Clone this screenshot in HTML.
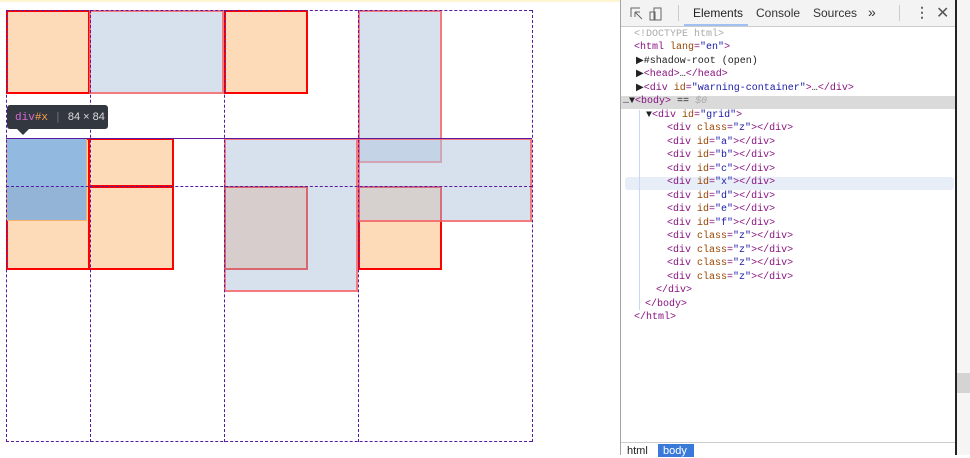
<!DOCTYPE html>
<html><head><style>
body{margin:0;width:970px;height:455px;overflow:hidden;background:#fff;position:relative;font-family:"Liberation Sans",sans-serif}
.a{position:absolute;box-sizing:border-box}
.o{background:#fddbb9;border:2px solid #f00}
.b{background:rgba(183,201,224,.55);border:2px solid rgba(255,80,80,.7)}
.h{border-left:1px dashed #5a1aa0}
.v{border-top:1px dashed #5a1aa0}
#dt{position:absolute;left:620px;top:0;width:337px;height:455px;border-left:1px solid #a3a3a3;background:#fff}
.tb{height:26px;border-bottom:1px solid #ccc;background:#f3f3f3;font-size:12px;color:#333}
.ln{position:absolute;left:0;font:10px/13.5px "Liberation Mono",monospace;white-space:pre;color:#881280}
.at{color:#994500}.av{color:#1a1aa6}.g{color:#aaa}.k{color:#222}
</style></head><body>
<div class="a" style="left:0;top:0;width:620px;height:2px;background:#fdf5d4"></div>
<div class="a o" style="left:6px;top:10px;width:84px;height:84px"></div>
<div class="a b" style="left:89px;top:10px;width:135px;height:84px"></div>
<div class="a o" style="left:224px;top:10px;width:84px;height:84px"></div>
<div class="a b" style="left:358px;top:10px;width:84px;height:153px"></div>
<div class="a o" style="left:6px;top:138px;width:84px;height:132px"></div>
<div class="a o" style="left:88px;top:138px;width:86px;height:49px"></div>
<div class="a o" style="left:88px;top:186px;width:86px;height:84px"></div>
<div class="a b" style="left:224px;top:138px;width:134px;height:154px"></div>
<div class="a" style="left:224px;top:186px;width:84px;height:84px;background:rgba(215,200,195,.8);border:2px solid rgba(220,60,70,.7)"></div>
<div class="a o" style="left:358px;top:186px;width:84px;height:84px"></div>
<div class="a b" style="left:358px;top:138px;width:174px;height:84px"></div>
<div class="a" style="left:6px;top:138px;width:81px;height:83px;background:#92b9e0;border:1px solid #f6b26b"></div>
<div class="a" style="left:7px;top:187px;width:79px;height:33px;background:#93b4d6"></div>
<div class="a h" style="left:6px;top:10px;height:432px"></div>
<div class="a h" style="left:90px;top:10px;height:432px"></div>
<div class="a h" style="left:224px;top:10px;height:432px"></div>
<div class="a h" style="left:358px;top:10px;height:432px"></div>
<div class="a h" style="left:532px;top:10px;height:432px"></div>
<div class="a v" style="left:6px;top:10px;width:526px"></div>
<div class="a v" style="left:6px;top:138px;width:526px;border-top-style:solid"></div>
<div class="a v" style="left:6px;top:186px;width:526px"></div>
<div class="a v" style="left:6px;top:441px;width:526px"></div>
<div class="a" style="left:7px;top:105px;width:101px;height:24px;background:#333740;border-radius:3px;font:11px/24px 'Liberation Mono',monospace;color:#ddd;padding-left:8px;white-space:nowrap"><span style="color:#d56ad6">div</span><span style="color:#f7a04b">#x</span> <span style="color:#777">|</span> <span style="font-family:'Liberation Sans'">84 × 84</span></div>
<div class="a" style="left:17px;top:129px;border:6px solid transparent;border-top:6px solid #333740;border-bottom:0"></div>
<div id="dt">
<div class="tb">
<svg style="position:absolute;left:8px;top:6px" width="34" height="16" fill="none" stroke="#666"><path d="M2 11V2h9M6 6l7 7M6 6h5M6 6v5" /><rect x="25" y="2" width="7" height="12"/><rect x="21" y="6" width="5" height="8"/></svg>
<div style="position:absolute;left:57px;top:5px;width:1px;height:16px;background:#ccc"></div>
<span style="position:absolute;left:72px;top:6px;color:#222">Elements</span>
<div style="position:absolute;left:63px;top:24px;width:64px;height:2px;background:#9fc0f0"></div>
<span style="position:absolute;left:135px;top:6px">Console</span>
<span style="position:absolute;left:192px;top:6px">Sources</span>
<span style="position:absolute;left:247px;top:4px;font-size:14px">»</span>
<div style="position:absolute;left:278px;top:5px;width:1px;height:16px;background:#ccc"></div>
<span style="position:absolute;left:294px;top:4px;font-size:14px;font-weight:bold;color:#666">⋮</span>
<span style="position:absolute;left:315px;top:3px;font-size:16px;color:#555">✕</span>
</div>
<div style="position:absolute;left:0;top:96px;width:337px;height:13px;background:#dadada"></div>
<div style="position:absolute;left:4px;top:177px;width:329px;height:13px;background:#e8eef8;border-radius:3px"></div>
<div style="position:absolute;left:18px;top:110px;width:1px;height:200px;background:#c8d8f4"></div>
<div class="ln g" style="top:28px;left:13px">&lt;!DOCTYPE html&gt;</div>
<div class="ln" style="top:41px;left:13px">&lt;html <span class="at">lang</span>=<span class="av">"en"</span>&gt;</div>
<div class="ln k" style="top:55px;left:15px">▶#shadow-root (open)</div>
<div class="ln" style="top:68px;left:15px"><span class="k">▶</span>&lt;head&gt;<span class="k">…</span>&lt;/head&gt;</div>
<div class="ln" style="top:82px;left:15px"><span class="k">▶</span>&lt;div <span class="at">id</span>=<span class="av">"warning-container"</span>&gt;<span class="k">…</span>&lt;/div&gt;</div>
<div class="ln" style="top:95px;left:2px"><span class="k">…▼</span>&lt;body&gt; <span class="k">==</span> <span class="g" style="font-style:italic">$0</span></div>
<div class="ln" style="top:109px;left:25px"><span class="k">▼</span>&lt;div <span class="at">id</span>=<span class="av">"grid"</span>&gt;</div>
<div class="ln" style="top:122px;left:46px">&lt;div <span class="at">class</span>=<span class="av">"z"</span>&gt;&lt;/div&gt;</div>
<div class="ln" style="top:136px;left:46px">&lt;div <span class="at">id</span>=<span class="av">"a"</span>&gt;&lt;/div&gt;</div>
<div class="ln" style="top:149px;left:46px">&lt;div <span class="at">id</span>=<span class="av">"b"</span>&gt;&lt;/div&gt;</div>
<div class="ln" style="top:163px;left:46px">&lt;div <span class="at">id</span>=<span class="av">"c"</span>&gt;&lt;/div&gt;</div>
<div class="ln" style="top:176px;left:46px">&lt;div <span class="at">id</span>=<span class="av">"x"</span>&gt;&lt;/div&gt;</div>
<div class="ln" style="top:190px;left:46px">&lt;div <span class="at">id</span>=<span class="av">"d"</span>&gt;&lt;/div&gt;</div>
<div class="ln" style="top:203px;left:46px">&lt;div <span class="at">id</span>=<span class="av">"e"</span>&gt;&lt;/div&gt;</div>
<div class="ln" style="top:217px;left:46px">&lt;div <span class="at">id</span>=<span class="av">"f"</span>&gt;&lt;/div&gt;</div>
<div class="ln" style="top:230px;left:46px">&lt;div <span class="at">class</span>=<span class="av">"z"</span>&gt;&lt;/div&gt;</div>
<div class="ln" style="top:244px;left:46px">&lt;div <span class="at">class</span>=<span class="av">"z"</span>&gt;&lt;/div&gt;</div>
<div class="ln" style="top:257px;left:46px">&lt;div <span class="at">class</span>=<span class="av">"z"</span>&gt;&lt;/div&gt;</div>
<div class="ln" style="top:271px;left:46px">&lt;div <span class="at">class</span>=<span class="av">"z"</span>&gt;&lt;/div&gt;</div>
<div class="ln" style="top:284px;left:35px">&lt;/div&gt;</div>
<div class="ln" style="top:298px;left:24px">&lt;/body&gt;</div>
<div class="ln" style="top:311px;left:13px">&lt;/html&gt;</div>
<div style="position:absolute;left:0;top:442px;width:337px;height:13px;border-top:1px solid #ccc;font-size:11px">
<span style="position:absolute;left:6px;top:2px;color:#222">html</span>
<span style="position:absolute;left:37px;top:1px;width:36px;height:13px;background:#3879d9;color:#fff;padding-left:5px;box-sizing:border-box;line-height:14px">body</span></div>
</div>
<div class="a" style="left:955px;top:0;width:2px;height:455px;background:#222"></div>
<div class="a" style="left:957px;top:0;width:13px;height:455px;background:#f5f5f5"></div>
<div class="a" style="left:957px;top:373px;width:13px;height:20px;background:#d4d4d4"></div>
</body></html>
